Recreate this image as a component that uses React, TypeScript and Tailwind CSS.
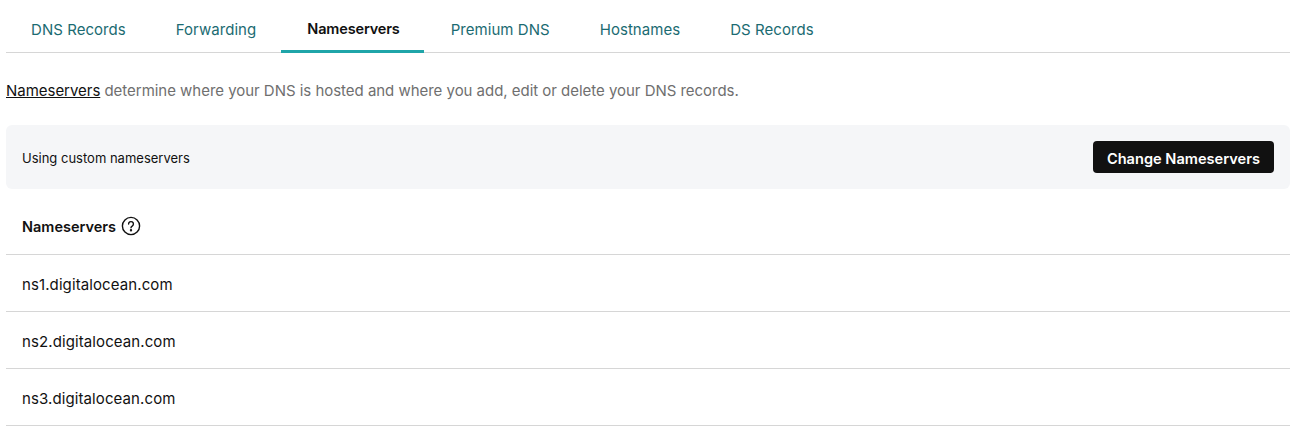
const tabs = ['DNS Records', 'Forwarding', 'Nameservers', 'Premium DNS', 'Hostnames', 'DS Records'];
const nameservers = ['ns1.digitalocean.com', 'ns2.digitalocean.com', 'ns3.digitalocean.com'];

function HelpIcon() {
  return (
    <svg width="20" height="20" viewBox="0 0 20 20" fill="none" stroke="#111111" strokeWidth="1.4" strokeLinecap="round">
      <circle cx="10" cy="10" r="8.6" />
      <path d="M7.6 8a2.4 2.4 0 1 1 3.6 2.1c-.8.5-1.2.9-1.2 1.7" />
      <circle cx="10" cy="14.3" r="0.5" fill="#111111" />
    </svg>
  );
}

export default function App() {
  return (
    <div className="min-h-[437px] bg-white pl-1.5 pr-[9px] font-['Inter','Noto_Sans',sans-serif] text-[#111111]">
      <div className="flex h-[53px] border-b border-[#d6d6d6]">
        {tabs.map((tab) => (
          <div
            key={tab}
            className={
              tab === 'Nameservers'
                ? 'mr-[2px] flex h-[53px] items-center border-b-[3px] border-[#1fa5a9] pl-[26px] pr-[24px] pt-[8px] text-[14.5px] font-semibold tracking-[-0.15px] text-[#111111]'
                : 'flex h-[53px] items-center px-[25px] pt-[7px] text-[15px] tracking-[0.05px] text-[#1b6b72]'
            }
          >
            {tab}
          </div>
        ))}
      </div>
      <p className="mt-[28px] h-[20px] text-[15px] leading-5 tracking-[-0.03px] text-[#6f6f6f]">
        <span className="text-[#111111] underline">Nameservers</span> determine where your DNS is hosted and where you add, edit or delete your DNS records.
      </p>
      <div className="mt-[24px] flex h-16 items-center justify-between rounded-md bg-[#f5f6f8] pl-4 pr-4">
        <span className="pt-1 text-[13px]">Using custom nameservers</span>
        <button className="h-8 rounded bg-[#111111] px-3.5 pt-1.5 text-[14.6px] font-semibold text-white">Change Nameservers</button>
      </div>
      <div className="flex h-[66px] items-center gap-[5px] border-b border-[#d6d6d6] pl-4 pt-[11px] text-[14.5px] font-semibold">
        Nameservers
        <span className="-mt-[3px]">
          <HelpIcon />
        </span>
      </div>
      {nameservers.map((ns) => (
        <div key={ns} className="flex h-[57px] items-center border-b border-[#d6d6d6] pl-4 pt-[5px] text-[15px] tracking-[0.1px]">
          {ns}
        </div>
      ))}
    </div>
  );
}
